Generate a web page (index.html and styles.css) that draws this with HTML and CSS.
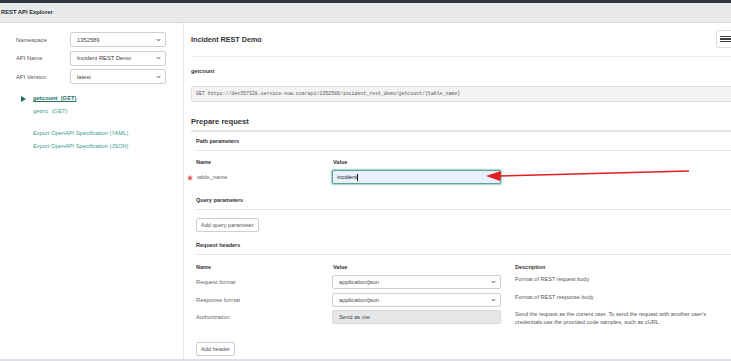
FILE: index.html
```html
<!DOCTYPE html>
<html lang="en">
<head>
  <meta charset="UTF-8" />
  <title>REST API Explorer</title>
  <link rel="stylesheet" href="styles.css">
</head>
<body>

  <div class="topbar"></div>
  <div class="titlebar">REST API Explorer</div>

  <div class="main">
    <div class="sidebar">
      <div class="field">
        <span class="field-label">Namespace</span>
        <div class="select">1352589<svg class="chev" viewBox="0 0 6 4"><path d="M1 1 L3 3 L5 1" /></svg></div>
      </div>
      <div class="field">
        <span class="field-label">API Name</span>
        <div class="select">Incident REST Demo<svg class="chev" viewBox="0 0 6 4"><path d="M1 1 L3 3 L5 1" /></svg></div>
      </div>
      <div class="field">
        <span class="field-label">API Version</span>
        <div class="select">latest<svg class="chev" viewBox="0 0 6 4"><path d="M1 1 L3 3 L5 1" /></svg></div>
      </div>

      <ul class="methods">
        <li class="method active">
          <svg class="caret" viewBox="0 0 5 6"><path d="M0 0 L5 3 L0 6 Z" /></svg>
          <a href="#">getcount &nbsp;(GET)</a>
        </li>
        <li class="method"><a href="#">getinc &nbsp;(GET)</a></li>
      </ul>

      <div class="exports">
        <a href="#">Export OpenAPI Specification (YAML)</a>
        <a href="#">Export OpenAPI Specification (JSON)</a>
      </div>
    </div>

    <div class="content">
      <div class="inner">
        <div class="top-row">
          <h1>Incident REST Demo</h1>
          <button class="menu-btn">
            <span></span><span></span><span></span>
          </button>
        </div>
        <div class="rule"></div>

        <div class="op-name">getcount</div>
        <div class="url">GET https://dev357328.service-now.com/api/1352589/incident_rest_demo/getcount/{table_name}</div>

        <h2 class="prepare">Prepare request</h2>

        <div class="panel">
          <h3 class="sub-title">Path parameters</h3>
          <div class="grid-head">
            <span>Name</span>
            <span>Value</span>
          </div>
          <div class="grid-row">
            <span class="row-label required">
              <svg class="star" viewBox="0 0 8 8"><path d="M4 0.5 V7.5 M1 2.2 L7 5.8 M7 2.2 L1 5.8" /></svg>table_name
            </span>
            <div class="input focus">incident<span class="cursor"></span></div>
          </div>

          <h3 class="sub-title spaced">Query parameters</h3>
          <button class="btn">Add query parameter</button>

          <h3 class="sub-title headers">Request headers</h3>
          <div class="grid-head three">
            <span>Name</span>
            <span>Value</span>
            <span>Description</span>
          </div>
          <div class="grid-row three">
            <span class="row-label">Request format</span>
            <div class="input">application/json<svg class="chev" viewBox="0 0 6 4"><path d="M1 1 L3 3 L5 1" /></svg></div>
            <p class="desc">Format of REST request body</p>
          </div>
          <div class="grid-row three">
            <span class="row-label">Response format</span>
            <div class="input">application/json<svg class="chev" viewBox="0 0 6 4"><path d="M1 1 L3 3 L5 1" /></svg></div>
            <p class="desc">Format of REST response body</p>
          </div>
          <div class="grid-row three auth">
            <span class="row-label">Authorization</span>
            <div class="input readonly">Send as me</div>
            <p class="desc">Send the request as the current user. To send the request with another user's credentials use the provided code samples, such as cURL.</p>
          </div>

          <button class="btn last">Add header</button>
        </div>
      </div>
    </div>
  </div>

  <!-- annotation arrow drawn over the screenshot -->
  <svg class="arrow" viewBox="0 0 731 361">
    <line x1="689" y1="171" x2="498" y2="176" />
    <path d="M486 176 L501 171 L500 181 Z" />
  </svg>

</body>
</html>
```

FILE: styles.css
```css
* {
  margin: 0;
  padding: 0;
  box-sizing: border-box;
  font-family: 'Liberation Sans', Arial, sans-serif;
}

body {
  background-color: #ffffff;
  color: #333;
  width: 731px;
  height: 361px;
  overflow: hidden;
  position: relative;
}

.topbar {
  height: 3px;
  background-color: #2f3642;
}

.titlebar {
  height: 20px;
  background-color: #e8eaec;
  border-bottom: 1px solid #d6d9dc;
  font-size: 5.8px;
  font-weight: bold;
  color: #2a2a2a;
  line-height: 19px;
  padding-left: 1px;
}

.main {
  display: flex;
  height: 338px;
  border-bottom: 2px solid #dcdde6;
}

/* left column */

.sidebar {
  width: 184px;
  flex-shrink: 0;
  border-right: 1px solid #e6e6e6;
  padding: 9px 0 0 16px;
}

.field {
  display: flex;
  align-items: center;
  height: 15px;
  margin-bottom: 3.5px;
}

.field-label {
  width: 54px;
  font-size: 5.8px;
  color: #555;
}

.select {
  width: 96px;
  height: 15px;
  border: 1px solid #cfcfcf;
  border-radius: 2px;
  font-size: 5.8px;
  color: #444;
  padding: 0 4px 0 6px;
  display: flex;
  align-items: center;
  justify-content: space-between;
}

.chev {
  width: 5px;
  height: 4px;
  fill: none;
  stroke: #444;
  stroke-width: 1.2;
}

.methods {
  list-style: none;
  margin-top: 8px;
}

.method {
  position: relative;
  padding-left: 17px;
  height: 13px;
  line-height: 13px;
  font-size: 5.8px;
}

.method a {
  color: #3a9a8d;
  text-decoration: none;
}

.method.active a {
  color: #247266;
  font-weight: bold;
  text-decoration: underline;
}

.caret {
  position: absolute;
  left: 5px;
  top: 3.5px;
  width: 5px;
  height: 6px;
  fill: #226b60;
}

.exports {
  margin-top: 9px;
  padding-left: 17px;
  display: flex;
  flex-direction: column;
}

.exports a {
  font-size: 5.7px;
  line-height: 13px;
  color: #3a9a8d;
  text-decoration: none;
}

/* right column */

.content {
  flex: 1;
  overflow: hidden;
  padding: 7px 0 0 7px;
}

.inner {
  width: 545px;
}

.top-row {
  height: 18px;
  display: flex;
  align-items: center;
  justify-content: space-between;
}

.top-row h1 {
  font-size: 7.2px;
  font-weight: bold;
  color: #333;
}

.menu-btn {
  width: 20px;
  height: 18px;
  background: #fff;
  border: 1px solid #dedede;
  border-radius: 2px;
  display: flex;
  flex-direction: column;
  justify-content: center;
  gap: 1px;
  padding-left: 3px;
}

.menu-btn span {
  display: block;
  width: 11px;
  height: 1.5px;
  background-color: #3c3c3c;
}

.rule {
  margin-top: 8px;
  border-top: 1px solid #ededed;
}

.op-name {
  margin-top: 9px;
  line-height: 10px;
  font-size: 5.5px;
  font-weight: bold;
  color: #333;
}

.url {
  margin-top: 10px;
  height: 16px;
  line-height: 14px;
  background-color: #f3f3f3;
  border: 1px solid #e0e0e0;
  border-radius: 2px;
  padding-left: 4px;
  font-family: 'Liberation Mono', monospace;
  font-size: 4.9px;
  color: #555;
}

.prepare {
  margin-top: 14px;
  line-height: 12px;
  font-size: 7.6px;
  font-weight: bold;
  color: #333;
  padding-bottom: 2px;
  border-bottom: 2px solid #e6e6e6;
}

.panel {
  margin-left: 5px;
}

.sub-title {
  margin-top: 4px;
  line-height: 10px;
  padding-bottom: 4px;
  border-bottom: 1px solid #e6e6e6;
  font-size: 5.5px;
  font-weight: bold;
  color: #333;
}

.sub-title.spaced {
  margin-top: 11px;
}

.sub-title.headers {
  margin-top: 8px;
}

.grid-head,
.grid-row {
  display: grid;
  grid-template-columns: 136px 169px;
}

.grid-head.three,
.grid-row.three {
  grid-template-columns: 136px 169px 1fr;
  column-gap: 0;
}

.grid-head {
  margin-top: 6px;
  line-height: 10px;
  font-size: 5.5px;
  font-weight: bold;
  color: #333;
}

.grid-head span:nth-child(2) {
  padding-left: 1px;
}

.grid-head.three {
  margin-top: 7px;
}

.grid-head.three span:nth-child(3) {
  padding-left: 14px;
}

.grid-row {
  margin-top: 3px;
  align-items: center;
}

.grid-row.three + .grid-row.three {
  margin-top: 4px;
}

.grid-row.auth {
  margin-top: 3px !important;
  align-items: start;
}

.row-label {
  font-size: 5.8px;
  color: #666;
  display: flex;
  align-items: center;
}

.grid-row.auth .row-label {
  line-height: 14px;
}

.required {
  position: relative;
  padding-left: 1px;
}

.star {
  position: absolute;
  left: -9px;
  top: 50%;
  margin-top: -2.5px;
  width: 6px;
  height: 6px;
  fill: none;
  stroke: #d43f3a;
  stroke-width: 1.3;
}

.input {
  height: 14px;
  border: 1px solid #cfcfcf;
  border-radius: 2px;
  font-size: 5.8px;
  color: #444;
  padding: 0 4px 0 6px;
  display: flex;
  align-items: center;
  justify-content: space-between;
}

.input.focus {
  justify-content: flex-start;
  background-color: #e8f0fe;
  border-color: #5fa397;
  box-shadow: 0 0 1.5px 0.5px #9fcfc6;
  padding-left: 4px;
  color: #222;
}

.cursor {
  display: inline-block;
  width: 1px;
  height: 7px;
  background-color: #111;
}

.input.readonly {
  background-color: #e6e7e9;
  border-color: #dadbdd;
}

.desc {
  padding-left: 14px;
  font-size: 5.6px;
  line-height: 8px;
  color: #555;
  align-self: start;
  padding-right: 20px;
}

.btn {
  margin-top: 8px;
  height: 14px;
  padding: 0 4px;
  background: #fff;
  border: 1px solid #cfcfcf;
  border-radius: 2px;
  font-size: 5.6px;
  color: #555;
  display: block;
}

.btn.last {
  margin-top: 16px;
}

.arrow {
  position: absolute;
  left: 0;
  top: 0;
  width: 731px;
  height: 361px;
  pointer-events: none;
}

.arrow line {
  stroke: #e41f1f;
  stroke-width: 1.6;
}

.arrow path {
  fill: #e41f1f;
}
```
